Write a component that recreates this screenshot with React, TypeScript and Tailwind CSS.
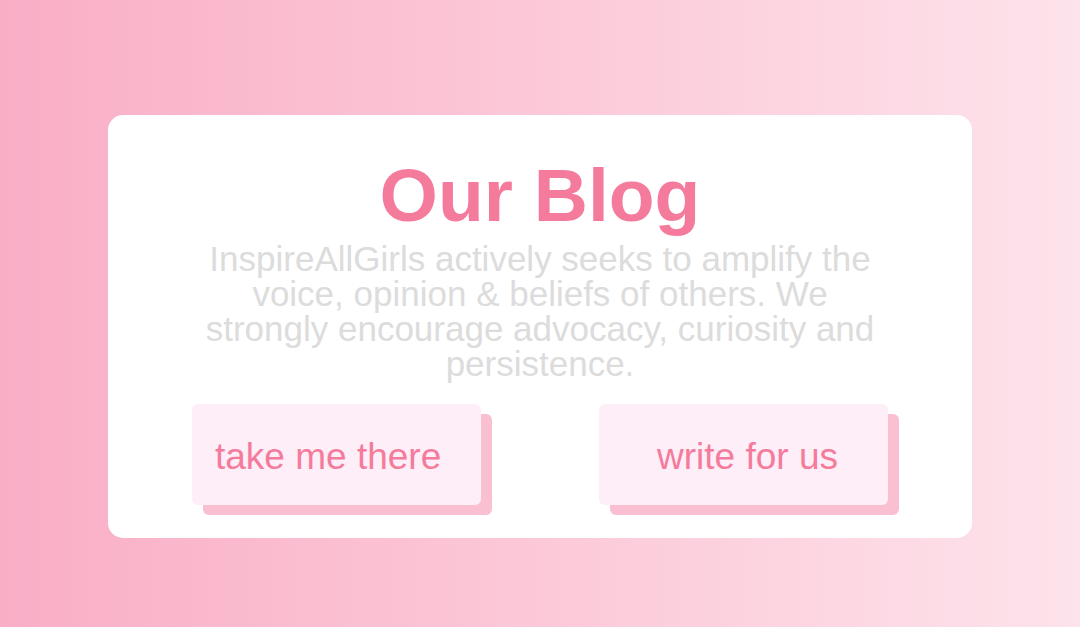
export default function App() {
  return (
    <div
      className="w-[1080px] h-[627px] bg-gradient-to-r from-[#f9aec6] to-[#fde3eb] pt-[115px] px-[108px]"
      style={{ fontFamily: '"Liberation Sans", Arial, sans-serif' }}
    >
      <div className="bg-white rounded-[15px] w-[864px] h-[423px] pt-[37px] flex flex-col items-center">
        <h1 className="text-[75px] font-bold text-[#f57b9d] leading-[86px]">Our Blog</h1>
        <p className="mt-[3px] w-[700px] text-center text-[35px] leading-[35px] text-[#dcdcdc]">
          InspireAllGirls actively seeks to amplify the voice, opinion &amp; beliefs of others. We strongly encourage advocacy, curiosity and persistence.
        </p>
        <div className="mt-[23px] flex gap-[118px]">
          <button className="w-[289px] h-[101px] rounded-[6px] bg-[#fdeef7] shadow-[11px_10px_0_#fac0d2] text-[37px] text-[#f57b9d] text-left pl-[23px] pt-[4px]">
            take me there
          </button>
          <button className="w-[289px] h-[101px] rounded-[6px] bg-[#fdeef7] shadow-[11px_10px_0_#fac0d2] text-[37px] text-[#f57b9d] text-center pl-[8px] pt-[4px]">
            write for us
          </button>
        </div>
      </div>
    </div>
  );
}
